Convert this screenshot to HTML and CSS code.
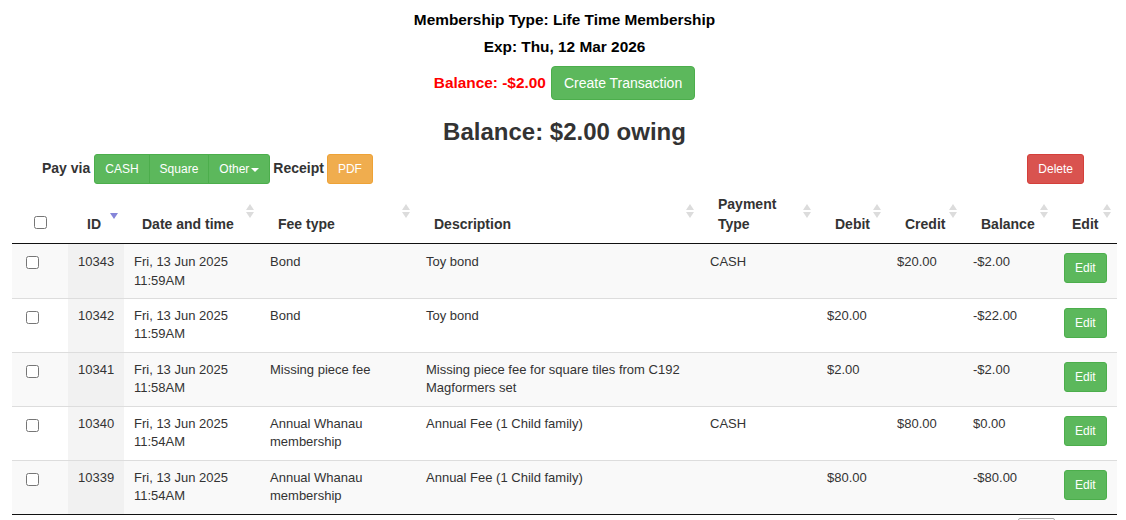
FILE: index.html
```html
<!DOCTYPE html>
<html>
<head>
<meta charset="utf-8">
<title>Transactions</title>
<link rel="stylesheet" href="styles.css">
</head>
<body>
<div class="page">
  <div class="summary">
    <p class="line">Membership Type: Life Time Membership</p>
    <p class="line line2">Exp: Thu, 12 Mar 2026</p>
    <div class="balance-row">
      <span class="neg">Balance: -$2.00</span>
      <button class="btn btn-success">Create Transaction</button>
    </div>
    <h3 class="owing">Balance: $2.00 owing</h3>
  </div>

  <div class="toolbar">
    <div class="pay">
      <span class="lbl">Pay via</span>
      <div class="btn-group">
        <button class="btn btn-sm btn-success">CASH</button><button class="btn btn-sm btn-success">Square</button><button class="btn btn-sm btn-success">Other<span class="caret"></span></button>
      </div>
      <span class="lbl">Receipt</span>
      <button class="btn btn-sm btn-warning">PDF</button>
    </div>
    <button class="btn btn-sm btn-danger">Delete</button>
  </div>

  <table class="tx">
    <colgroup>
      <col class="c-chk"><col class="c-id"><col class="c-date"><col class="c-fee"><col class="c-desc"><col class="c-pay"><col class="c-debit"><col class="c-credit"><col class="c-bal"><col class="c-edit">
    </colgroup>
    <thead>
      <tr>
        <th class="chk"><input type="checkbox" class="cb-head"></th>
        <th class="sorted">ID</th>
        <th class="sorting">Date and time</th>
        <th class="sorting">Fee type</th>
        <th class="sorting">Description</th>
        <th class="sorting">Payment<br>Type</th>
        <th class="sorting">Debit</th>
        <th class="sorting">Credit</th>
        <th class="sorting">Balance</th>
        <th class="sorting">Edit</th>
      </tr>
    </thead>
    <tbody>
      <tr class="odd first">
        <td><input type="checkbox" class="cb"></td>
        <td class="id">10343</td>
        <td>Fri, 13 Jun 2025<br>11:59AM</td>
        <td>Bond</td>
        <td>Toy bond</td>
        <td>CASH</td>
        <td></td>
        <td>$20.00</td>
        <td>-$2.00</td>
        <td><button class="btn btn-sm btn-success">Edit</button></td>
      </tr>
      <tr class="even">
        <td><input type="checkbox" class="cb"></td>
        <td class="id">10342</td>
        <td>Fri, 13 Jun 2025<br>11:59AM</td>
        <td>Bond</td>
        <td>Toy bond</td>
        <td></td>
        <td>$20.00</td>
        <td></td>
        <td>-$22.00</td>
        <td><button class="btn btn-sm btn-success">Edit</button></td>
      </tr>
      <tr class="odd">
        <td><input type="checkbox" class="cb"></td>
        <td class="id">10341</td>
        <td>Fri, 13 Jun 2025<br>11:58AM</td>
        <td>Missing piece fee</td>
        <td>Missing piece fee for square tiles from C192<br>Magformers set</td>
        <td></td>
        <td>$2.00</td>
        <td></td>
        <td>-$2.00</td>
        <td><button class="btn btn-sm btn-success">Edit</button></td>
      </tr>
      <tr class="even">
        <td><input type="checkbox" class="cb"></td>
        <td class="id">10340</td>
        <td>Fri, 13 Jun 2025<br>11:54AM</td>
        <td>Annual Whanau<br>membership</td>
        <td>Annual Fee (1 Child family)</td>
        <td>CASH</td>
        <td></td>
        <td>$80.00</td>
        <td>$0.00</td>
        <td><button class="btn btn-sm btn-success">Edit</button></td>
      </tr>
      <tr class="odd last">
        <td><input type="checkbox" class="cb"></td>
        <td class="id">10339</td>
        <td>Fri, 13 Jun 2025<br>11:54AM</td>
        <td>Annual Whanau<br>membership</td>
        <td>Annual Fee (1 Child family)</td>
        <td></td>
        <td>$80.00</td>
        <td></td>
        <td>-$80.00</td>
        <td><button class="btn btn-sm btn-success">Edit</button></td>
      </tr>
    </tbody>
  </table>

  <div class="dt-footer">
    <div class="pg"></div>
  </div>
</div>
</body>
</html>
```

FILE: styles.css
```css
* { box-sizing: border-box; }

html, body {
  margin: 0;
  padding: 0;
  background: #fff;
}

body {
  font-family: "Liberation Sans", Arial, Helvetica, sans-serif;
  font-size: 14px;
  line-height: 1.42857;
  color: #333;
}

.page {
  padding: 0 9px 0 12px;
}

.summary {
  text-align: center;
  padding-top: 10px;
}

.line {
  margin: 0;
  font-size: 15.4px;
  font-weight: bold;
  line-height: 20px;
  color: #000;
}

.line2 {
  margin-top: 7px;
}

.balance-row {
  margin-top: 9px;
  display: flex;
  justify-content: center;
  align-items: center;
  gap: 5px;
}

.neg {
  color: #f00;
  font-weight: bold;
  font-size: 15.4px;
}

.owing {
  margin: 19px 0 9px;
  font-size: 24px;
  line-height: 26.4px;
  font-weight: bold;
  color: #333;
}

/* Buttons */
.btn {
  font-family: inherit;
  display: inline-block;
  font-size: 14px;
  line-height: 20px;
  padding: 6px 12px;
  border: 1px solid transparent;
  border-radius: 4px;
  color: #fff;
  cursor: pointer;
  white-space: nowrap;
  margin: 0;
}

.btn-sm {
  font-size: 12px;
  line-height: 18px;
  padding: 5px 10px;
  border-radius: 3px;
}

.btn-success { background: #5cb85c; border-color: #4cae4c; }
.btn-warning { background: #f0ad4e; border-color: #eea236; }
.btn-danger  { background: #d9534f; border-color: #d43f3a; }

.btn-group {
  display: inline-flex;
}

.btn-group .btn {
  border-radius: 0;
  margin-left: -1px;
}

.btn-group .btn:first-child {
  margin-left: 0;
  border-radius: 3px 0 0 3px;
}

.btn-group .btn:last-child {
  border-radius: 0 3px 3px 0;
}

.caret {
  display: inline-block;
  width: 0;
  height: 0;
  margin-left: 2px;
  vertical-align: middle;
  border-top: 4px solid #fff;
  border-left: 4px solid transparent;
  border-right: 4px solid transparent;
}

/* Toolbar */
.toolbar {
  display: flex;
  justify-content: space-between;
  align-items: center;
  padding: 0 33px 0 30px;
  height: 30px;
}

.pay {
  display: flex;
  align-items: center;
  gap: 3px;
}

.pay .btn-group {
  margin-left: 1px;
}

.lbl {
  font-weight: bold;
  font-size: 14px;
  color: #333;
}

/* Table */
.tx {
  width: 100%;
  table-layout: fixed;
  border-collapse: collapse;
  font-size: 13px;
  line-height: 1.42857;
  color: #333;
}

.c-chk { width: 56px; }
.c-id { width: 56px; }
.c-date { width: 136px; }
.c-fee { width: 156px; }
.c-desc { width: 284px; }
.c-pay { width: 117px; }
.c-debit { width: 70px; }
.c-credit { width: 76px; }
.c-bal { width: 91px; }
.c-edit { width: 63px; }

.tx th {
  position: relative;
  font-size: 14px;
  font-weight: bold;
  line-height: 20px;
  text-align: left;
  vertical-align: bottom;
  padding: 10px 10px 9px 18px;
  border-bottom: 1px solid #111;
  white-space: nowrap;
}

.tx th.sorted {
  padding-left: 19px;
}

.tx th.sorting::before,
.tx th.sorting::after,
.tx th.sorted::after {
  content: "";
  position: absolute;
  right: 6px;
  width: 0;
  height: 0;
  border-left: 4px solid transparent;
  border-right: 4px solid transparent;
}

.tx th.sorting::before {
  top: 20px;
  border-bottom: 6px solid #dcdcdc;
}

.tx th.sorting::after {
  top: 28px;
  border-top: 6px solid #dcdcdc;
}

.tx th.sorted::after {
  top: 29px;
  border-top: 6px solid #8585d9;
}

.cb-head {
  margin: 0 0 0 4px;
  width: 13px;
  height: 13px;
}

.tx td {
  padding: 8px 10px;
  vertical-align: top;
  border-top: 1px solid #ddd;
}

.tx td .btn {
  margin-top: 1px;
}

.tx tr.first td {
  border-top: none;
  padding-top: 9px;
  padding-bottom: 7px;
}

.tx tr.first td .btn {
  margin-top: 0;
}

.tx tr.first td .cb {
  margin-top: 3px;
}

.tx tr.odd td { background: #f9f9f9; }
.tx tr.even td { background: #fff; }
.tx tr.odd td.id { background: #f1f1f1; }
.tx tr.even td.id { background: #f4f4f4; }

.tx tr.last td {
  border-bottom: 1px solid #111;
}

.tx td.id {
  text-align: right;
}

.cb {
  margin: 4px 0 0 4px;
  width: 13px;
  height: 13px;
  display: block;
}

/* Footer */
.dt-footer {
  display: flex;
  justify-content: flex-end;
  padding: 3px 62px 0 0;
}

.pg {
  width: 37px;
  height: 26px;
  border: 1px solid #a9a9a9;
  border-radius: 2px;
  background: linear-gradient(#fff, #e0e0e0);
}
```
